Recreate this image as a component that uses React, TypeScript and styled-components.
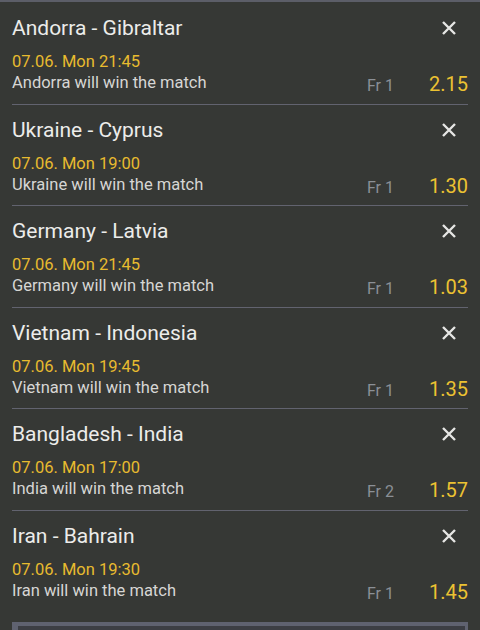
import React from "react";
import styled, { createGlobalStyle } from "styled-components";

const Global = createGlobalStyle`
  html, body { margin: 0; padding: 0; background: #363835; }
  body { font-family: Roboto, "Noto Sans", sans-serif; }
`;

const Page = styled.div`
  width: 480px;
  height: 630px;
  background: #363835;
  border-top: 2px solid #5c5e68;
  padding-top: 1px;
  box-sizing: border-box;
  display: flex;
  flex-direction: column;
  overflow: hidden;
`;

const Row = styled.div<{ $last?: boolean }>`
  flex-shrink: 0;
  margin: 0 12px;
  height: 101.5px;
  box-sizing: border-box;
  border-bottom: 1px solid ${(p) => (p.$last ? "transparent" : "#62636f")};
  display: flex;
  flex-direction: column;
  padding-top: 12px;
`;

const TitleLine = styled.div`
  display: flex;
  justify-content: space-between;
  align-items: center;
  height: 26px;
`;

const Title = styled.div`
  font-size: 21px;
  color: #ececea;
  line-height: 26px;
`;

const Close = styled.button`
  background: none;
  border: none;
  padding: 0;
  margin-right: 11px;
  width: 16px;
  height: 16px;
  display: flex;
  cursor: pointer;
`;

const DateText = styled.div`
  margin-top: 11px;
  font-size: 16.5px;
  line-height: 20px;
  color: #e8bb2f;
`;

const Bottom = styled.div`
  margin-top: 1px;
  display: flex;
  align-items: flex-start;
`;

const Desc = styled.div`
  flex: 1;
  font-size: 16.5px;
  line-height: 20px;
  color: #d6d6d4;
`;

const League = styled.div`
  margin-top: 3px;
  font-size: 16px;
  line-height: 20px;
  color: #8b9096;
  margin-right: 35px;
`;

const Odds = styled.div`
  margin-top: -1px;
  font-size: 20px;
  line-height: 24px;
  color: #ecc232;
`;

const Footer = styled.div`
  flex-shrink: 0;
  margin: 10px 12px 0;
  height: 20px;
  background: #5f6270;
  padding: 4px 3px 0 6px;
`;

const FooterInner = styled.div`
  height: 20px;
  background: #3c3e44;
`;

const X = () => (
  <svg width="16" height="16" viewBox="0 0 16 16">
    <path d="M2 2 L14 14 M14 2 L2 14" stroke="#e6e6e4" strokeWidth="2.4" strokeLinecap="butt" />
  </svg>
);

const bets = [
  { title: "Andorra - Gibraltar", date: "07.06. Mon 21:45", desc: "Andorra will win the match", league: "Fr 1", odds: "2.15" },
  { title: "Ukraine - Cyprus", date: "07.06. Mon 19:00", desc: "Ukraine will win the match", league: "Fr 1", odds: "1.30" },
  { title: "Germany - Latvia", date: "07.06. Mon 21:45", desc: "Germany will win the match", league: "Fr 1", odds: "1.03" },
  { title: "Vietnam - Indonesia", date: "07.06. Mon 19:45", desc: "Vietnam will win the match", league: "Fr 1", odds: "1.35" },
  { title: "Bangladesh - India", date: "07.06. Mon 17:00", desc: "India will win the match", league: "Fr 2", odds: "1.57" },
  { title: "Iran - Bahrain", date: "07.06. Mon 19:30", desc: "Iran will win the match", league: "Fr 1", odds: "1.45" },
];

export default function App() {
  return (
    <>
      <Global />
      <Page>
        {bets.map((b, i) => (
          <Row key={b.title} $last={i === bets.length - 1}>
            <TitleLine>
              <Title>{b.title}</Title>
              <Close aria-label="remove"><X /></Close>
            </TitleLine>
            <DateText>{b.date}</DateText>
            <Bottom>
              <Desc>{b.desc}</Desc>
              <League>{b.league}</League>
              <Odds>{b.odds}</Odds>
            </Bottom>
          </Row>
        ))}
        <Footer>
          <FooterInner />
        </Footer>
      </Page>
    </>
  );
}
